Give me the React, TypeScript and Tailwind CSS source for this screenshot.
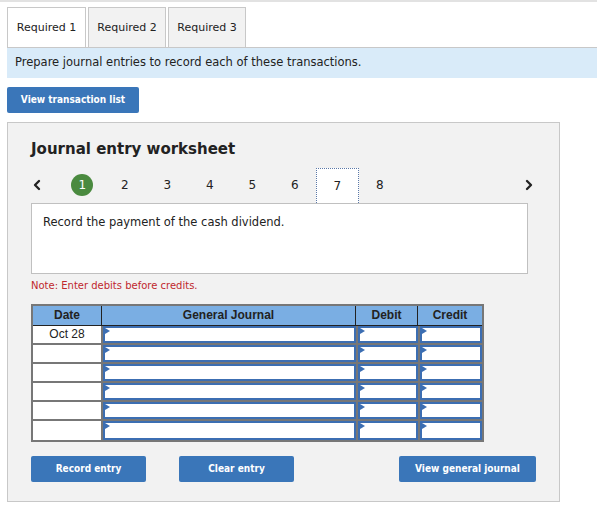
import { ChevronLeft, ChevronRight } from 'lucide-react';

const TABS = ['Required 1', 'Required 2', 'Required 3'];
const STEPS = [1, 2, 3, 4, 5, 6, 7, 8];
const ROWS = ['Oct 28', '', '', '', '', ''];

function InputCell({ width }: { width: string }) {
  return (
    <div className={`${width} h-full pl-[2px] bg-[#777]`}>
      <div className="relative h-full border-2 border-[#3c6eb2] bg-white">
        <span className="absolute left-0 top-0 w-0 h-0 border-y-[3px] border-y-transparent border-l-[5px] border-l-[#3c6eb2]" />
      </div>
    </div>
  );
}

function BlueButton({ label, className = '' }: { label: string; className?: string }) {
  return (
    <button
      className={`shrink-0 h-[26px] rounded-[2px] bg-[#3a76b9] text-white text-[10px] font-bold font-['DejaVu_Sans_Condensed','DejaVu_Sans',sans-serif] ${className}`}
    >
      {label}
    </button>
  );
}

export default function App() {
  return (
    <div className="w-[597px] h-[509px] bg-white font-['DejaVu_Sans',sans-serif] text-[#222]">
      <div className="h-[2px] bg-[#e2e2e2]" />

      {/* Tabs */}
      <div className="flex gap-[2px] pl-[7px] pt-[5px]">
        {TABS.map((tab, i) => (
          <div
            key={tab}
            className={`h-[40px] pt-[1px] flex items-center justify-center border border-b-0 border-[#c8c8c8] text-[11px] ${
              i === 0 ? 'w-[79px] bg-white' : 'w-[78px] bg-[#f2f2f2]'
            }`}
          >
            {tab}
          </div>
        ))}
      </div>

      <div className="ml-[7px] h-[31px] flex items-center pl-[8px] bg-[#d9ebf9] text-[11.5px] border-t border-[#c8c8c8]">
        Prepare journal entries to record each of these transactions.
      </div>

      <div className="pl-[7px] pt-[8px]">
        <BlueButton label="View transaction list" className="w-[132px]" />
      </div>

      {/* Worksheet */}
      <div className="ml-[7px] mt-[9px] w-[553px] h-[380px] bg-[#f2f2f2] border border-[#c8c8c8] pl-[23px] pr-[31px]">
        <h2 className="pt-[16px] text-[15px] font-bold leading-[20px]">Journal entry worksheet</h2>

        <div className="relative mt-[9px] h-[35px] flex items-center">
          <ChevronLeft size={16} strokeWidth={3.5} className="-ml-[2px]" />
          <div className="flex items-center ml-[16px]">
            {STEPS.map((n) => {
              if (n === 1)
                return (
                  <div key={n} className="w-[42.5px] flex justify-center">
                    <span className="w-[22px] h-[22px] rounded-full bg-[#4a8a3f] text-white text-[12px] flex items-center justify-center">
                      1
                    </span>
                  </div>
                );
              if (n === 7)
                return (
                  <div
                    key={n}
                    className="w-[42.5px] h-[35px] bg-white border border-dotted border-[#5b78a8] border-b-0 flex items-center justify-center text-[12px]"
                  >
                    7
                  </div>
                );
              return (
                <div key={n} className="w-[42.5px] flex justify-center text-[12px]">
                  {n}
                </div>
              );
            })}
          </div>
          <ChevronRight size={16} strokeWidth={3.5} className="absolute left-[490px]" />
        </div>

        <div className="w-[497px] h-[71px] bg-white border border-[#c0c0c0] px-[11px] pt-[10px] text-[11.5px]">
          Record the payment of the cash dividend.
        </div>

        <p className="mt-[4px] text-[10px] leading-[15px] text-[#c0282d]">Note: Enter debits before credits.</p>

        {/* Journal table */}
        <div className="mt-[11px] w-[453px] border-2 border-[#777] font-['Liberation_Sans',Arial,sans-serif] text-[12px]">
          <div className="flex h-[20px] bg-[#7aaee3] border-b border-[#222] font-bold text-[#222]">
            <div className="w-[69px] flex items-center justify-center border-r border-[#222]">Date</div>
            <div className="w-[254px] flex items-center justify-center border-r border-[#222]">General Journal</div>
            <div className="w-[62px] flex items-center justify-center border-r border-[#222]">Debit</div>
            <div className="flex-1 flex items-center justify-center">Credit</div>
          </div>
          {ROWS.map((d, i) => (
            <div key={i} className={`flex h-[19px] ${i === 5 ? '' : 'border-b-2 border-[#777]'}`}>
              <div className="w-[68px] bg-white flex items-center justify-center">{d}</div>
              <InputCell width="w-[255px]" />
              <InputCell width="w-[62px]" />
              <InputCell width="flex-1" />
            </div>
          ))}
        </div>

        <div className="mt-[14px] flex">
          <BlueButton label="Record entry" className="w-[115px]" />
          <BlueButton label="Clear entry" className="w-[115px] ml-[33px]" />
          <BlueButton label="View general journal" className="w-[137px] ml-[105px]" />
        </div>
      </div>
    </div>
  );
}
